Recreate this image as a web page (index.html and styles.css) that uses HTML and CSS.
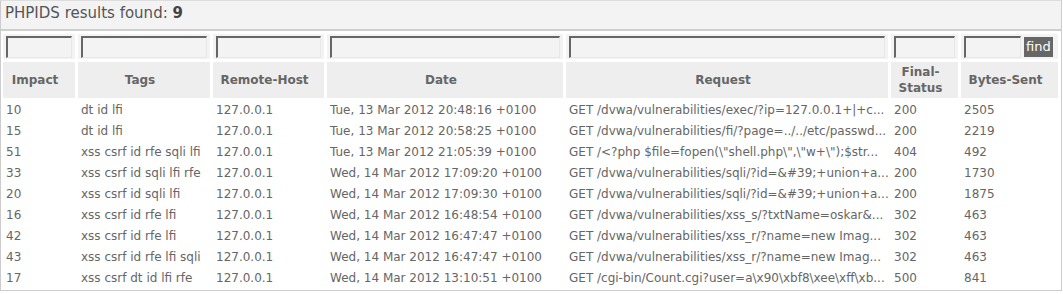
FILE: index.html
```html
<!DOCTYPE html>
<html>
<head>
<meta charset="utf-8">
<link rel="stylesheet" href="styles.css">
</head>
<body>
<div class="panel">
  <div class="title">PHPIDS results found: <b>9</b></div>
  <table class="results">
    <colgroup>
      <col class="c-impact"><col class="c-tags"><col class="c-host"><col class="c-date"><col class="c-req"><col class="c-status"><col class="c-bytes">
    </colgroup>
    <thead>
      <tr class="filters">
        <td><input type="text"></td>
        <td><input type="text"></td>
        <td><input type="text"></td>
        <td><input type="text"></td>
        <td><input type="text"></td>
        <td><input type="text"></td>
        <td class="last"><input type="text" class="short"><button>find</button></td>
      </tr>
      <tr class="heads">
        <th>Impact</th><th>Tags</th><th>Remote-Host</th><th>Date</th><th>Request</th><th>Final-Status</th><th>Bytes-Sent</th>
      </tr>
    </thead>
    <tbody>
      <tr><td>10</td><td>dt id lfi</td><td>127.0.0.1</td><td>Tue, 13 Mar 2012 20:48:16 +0100</td><td>GET /dvwa/vulnerabilities/exec/?ip=127.0.0.1+|+c...</td><td>200</td><td>2505</td></tr>
      <tr><td>15</td><td>dt id lfi</td><td>127.0.0.1</td><td>Tue, 13 Mar 2012 20:58:25 +0100</td><td>GET /dvwa/vulnerabilities/fi/?page=../../etc/passwd...</td><td>200</td><td>2219</td></tr>
      <tr><td>51</td><td>xss csrf id rfe sqli lfi</td><td>127.0.0.1</td><td>Tue, 13 Mar 2012 21:05:39 +0100</td><td>GET /&lt;?php $file=fopen(\"shell.php\",\"w+\");$str...</td><td>404</td><td>492</td></tr>
      <tr><td>33</td><td>xss csrf id sqli lfi rfe</td><td>127.0.0.1</td><td>Wed, 14 Mar 2012 17:09:20 +0100</td><td>GET /dvwa/vulnerabilities/sqli/?id=&amp;#39;+union+a...</td><td>200</td><td>1730</td></tr>
      <tr><td>20</td><td>xss csrf id sqli lfi</td><td>127.0.0.1</td><td>Wed, 14 Mar 2012 17:09:30 +0100</td><td>GET /dvwa/vulnerabilities/sqli/?id=&amp;#39;+union+a...</td><td>200</td><td>1875</td></tr>
      <tr><td>16</td><td>xss csrf id rfe lfi</td><td>127.0.0.1</td><td>Wed, 14 Mar 2012 16:48:54 +0100</td><td>GET /dvwa/vulnerabilities/xss_s/?txtName=oskar&amp;...</td><td>302</td><td>463</td></tr>
      <tr><td>42</td><td>xss csrf id rfe lfi</td><td>127.0.0.1</td><td>Wed, 14 Mar 2012 16:47:47 +0100</td><td>GET /dvwa/vulnerabilities/xss_r/?name=new Imag...</td><td>302</td><td>463</td></tr>
      <tr><td>43</td><td>xss csrf id rfe lfi sqli</td><td>127.0.0.1</td><td>Wed, 14 Mar 2012 16:47:47 +0100</td><td>GET /dvwa/vulnerabilities/xss_r/?name=new Imag...</td><td>302</td><td>463</td></tr>
      <tr><td>17</td><td>xss csrf dt id lfi rfe</td><td>127.0.0.1</td><td>Wed, 14 Mar 2012 13:10:51 +0100</td><td>GET /cgi-bin/Count.cgi?user=a\x90\xbf8\xee\xff\xb...</td><td>500</td><td>841</td></tr>
    </tbody>
  </table>
</div>
</body>
</html>
```

FILE: styles.css
```css
html, body {
  margin: 0;
  padding: 0;
  background: #fff;
}
body {
  font-family: "DejaVu Sans", Verdana, sans-serif;
  font-size: 12px;
  color: #666;
}
.panel {
  width: 1062px;
  box-sizing: border-box;
  border: 1px solid #ccc;
  border-top-color: #ddd;
}
.title {
  height: 28px;
  line-height: 25px;
  padding-left: 4px;
  background: #f3f3f3;
  border-bottom: 2px solid #cfcfcf;
  font-size: 15px;
  color: #555;
}
.title b {
  color: #444;
}
.results {
  border-collapse: separate;
  border-spacing: 3px;
  table-layout: fixed;
  width: 1061px;
  margin-left: -1px;
}
.c-impact { width: 72px; }
.c-tags { width: 132px; }
.c-host { width: 111px; }
.c-date { width: 236px; }
.c-req { width: 322px; }
.c-status { width: 67px; }
.c-bytes { width: 97px; }
.filters td {
  background: #f3f3f3;
  height: 25px;
  padding: 2px 3px 1px 3px;
  box-sizing: border-box;
}
.filters input {
  display: block;
  width: 100%;
  height: 22px;
  box-sizing: border-box;
  margin: 0;
  padding: 0 2px;
  background: #f3f3f3;
  border-style: solid;
  border-width: 2px 1px 1px 2px;
  border-color: #666 #e8e8e8 #e8e8e8 #666;
  font-family: inherit;
  font-size: 12px;
}
.last input.short {
  display: inline-block;
  vertical-align: top;
  width: 57px;
}
.last button {
  display: inline-block;
  vertical-align: top;
  margin: 1px 0 0 3px;
  height: 20px;
  padding: 0 2px;
  border: 0;
  background: #666;
  color: #fff;
  font-family: inherit;
  font-size: 13px;
  line-height: 20px;
}
.heads th {
  background: #eee;
  color: #666;
  font-weight: bold;
  font-size: 12px;
  height: 36px;
  padding: 2px 12px 2px 4px;
  box-sizing: border-box;
  text-align: center;
  line-height: 16px;
}
tbody td {
  height: 18px;
  padding: 0 3px;
  box-sizing: border-box;
  white-space: nowrap;
  overflow: hidden;
  line-height: 18px;
}
```
